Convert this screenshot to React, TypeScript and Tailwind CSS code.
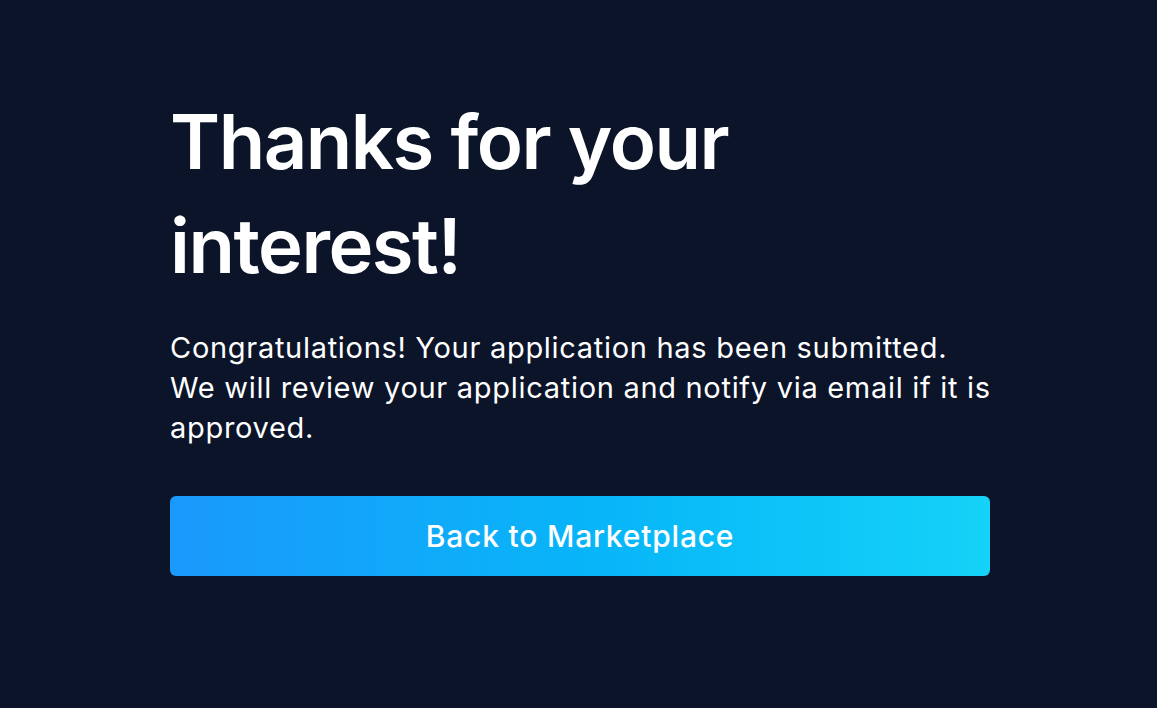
export default function App() {
  return (
    <div className="min-h-[708px] w-full bg-[#0b1428] font-['Inter',sans-serif] text-white">
      <div className="ml-[170px] w-[820px] pt-[89px]">
        <h1 className="w-[600px] text-[76px] leading-[104px] font-semibold tracking-[-1.5px]">
          Thanks for your interest!
        </h1>
        <p className="mt-[31px] w-[830px] text-[29px] leading-[40px] tracking-[0.7px]">
          Congratulations! Your application has been submitted. We will review your
          application and notify via email if it is approved.
        </p>
        <button className="mt-[48px] flex h-[80px] w-full items-center justify-center rounded-md bg-gradient-to-r from-[#1a99fc] via-[#08b4f8] to-[#15d2f8] text-[30px] font-medium tracking-[0.8px] text-white">
          Back to Marketplace
        </button>
      </div>
    </div>
  );
}
